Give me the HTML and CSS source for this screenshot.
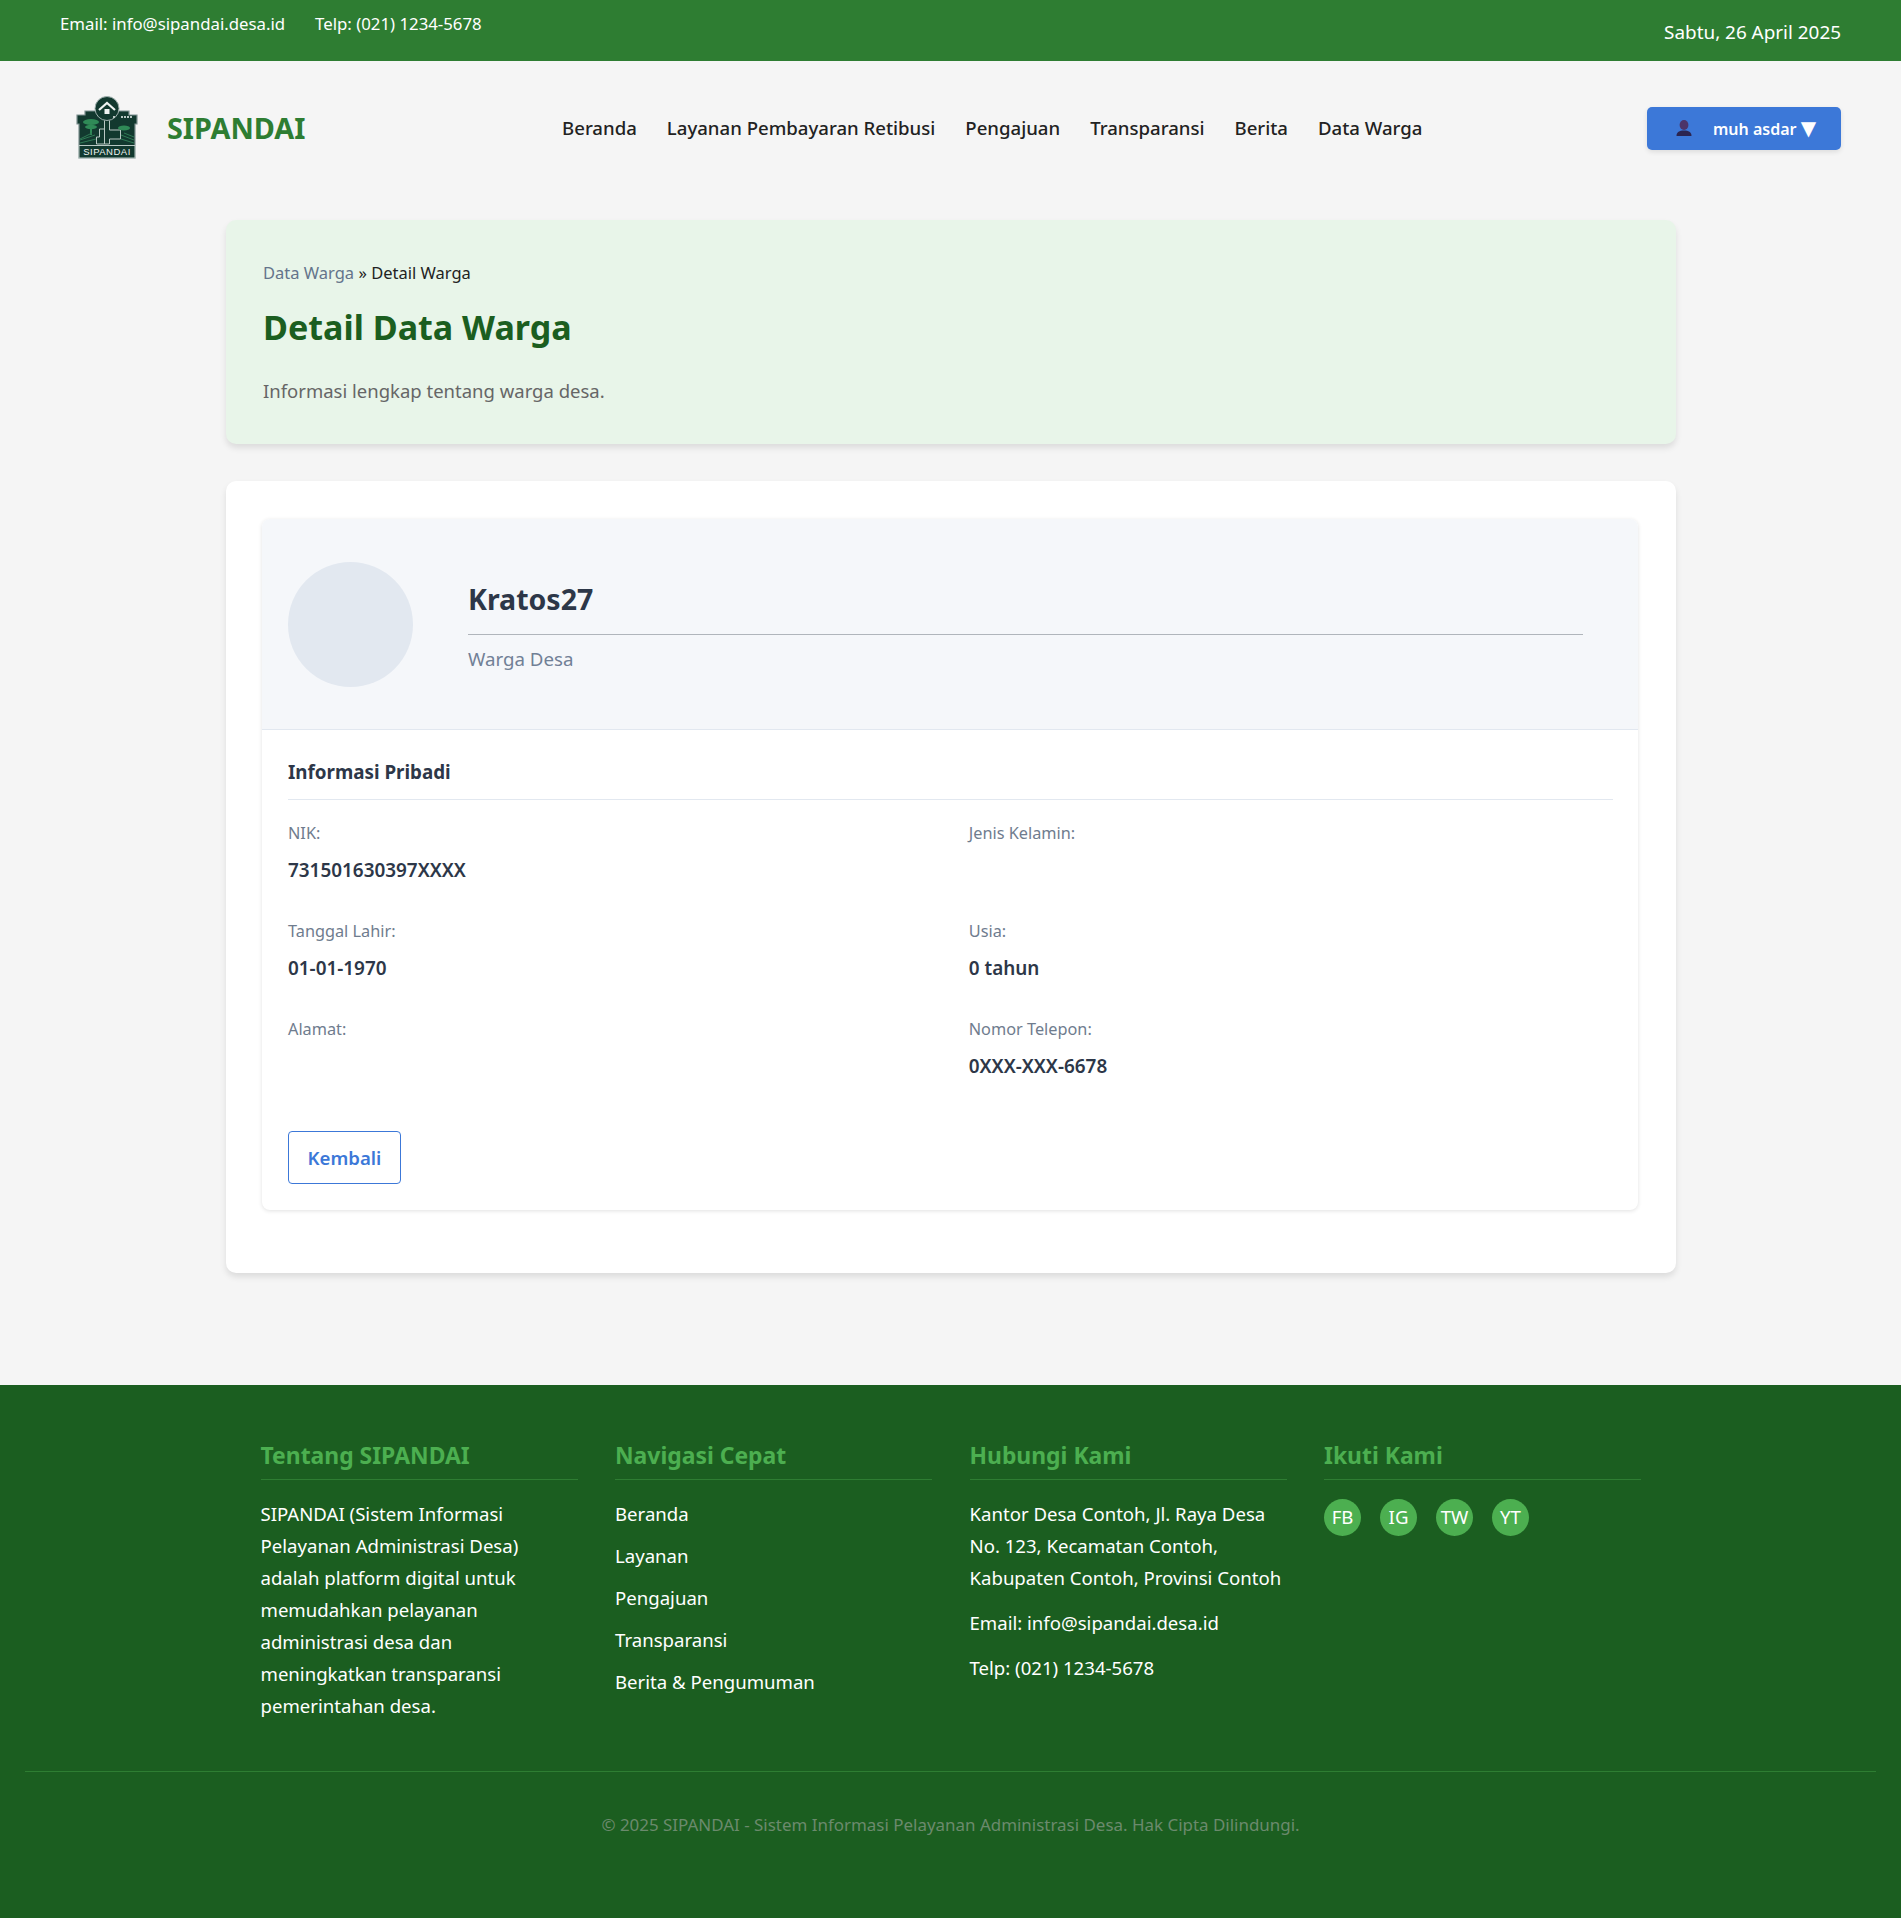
FILE: index.html
```html
<!DOCTYPE html>
<html lang="id">
<head>
    <meta charset="UTF-8">
    <meta name="viewport" content="width=device-width, initial-scale=1.0">
    <title>Detail Data Warga - SIPANDAI</title>
    <link rel="stylesheet" href="styles.css">
</head>
<body>
    <div class="topbar">
        <div class="topbar-contact">
            <span>Email: info@sipandai.desa.id</span>
            <span>Telp: (021) 1234-5678</span>
        </div>
        <div class="topbar-date">Sabtu, 26 April 2025</div>
    </div>

    <header class="site-header">
        <a class="brand" href="#">
            <svg class="brand-logo" viewBox="0 0 64 64" width="64" height="64">
                <path d="M10 15h11v-3h22v3h11v4h8v9h-2v34H4V28H2v-9h8z" fill="#12392f" stroke="#7f9291" stroke-width="1.2"/>
                <circle cx="32" cy="12.500" r="12" fill="#12392f" stroke="#9fb0ae" stroke-width="1"/>
                <path d="M24 14l8-7 8 7" fill="none" stroke="#eef3f1" stroke-width="2.200"/>
                <rect x="29.500" y="13" width="5" height="5" fill="#eef3f1"/>
                <path d="M29.500 24.500V48h5V43h11v-9h-11V24.500M29.500 33h-5v8h-3v7h8" fill="none" stroke="#b9c8c4" stroke-width="1"/>
                <ellipse cx="16" cy="26" rx="8" ry="3" fill="#2f8a57"/>
                <ellipse cx="16" cy="31" rx="6" ry="2.200" fill="#2f8a57"/>
                <rect x="15" y="31" width="2" height="8" fill="#2f8a57"/>
                <ellipse cx="49" cy="32" rx="6" ry="2.500" fill="#2f8a57"/>
                <path d="M38 21h3M46 21h12" stroke="#b9c8c4" stroke-width="2" stroke-dasharray="2 1"/>
                <path d="M5 44l15-5M5 47l16-4M5 43l12-6M59 44l-13-5M59 47l-13-4M59 41l-10-4" stroke="#2f7a55" stroke-width="1"/>
                <rect x="4" y="49.500" width="56" height="12.500" fill="#12392f" stroke="#b9c8c4" stroke-width="1"/>
                <text x="32" y="59.400" class="brand-logo-text" text-anchor="middle">SIPANDAI</text>
            </svg>
            <span class="brand-name">SIPANDAI</span>
        </a>
        <nav class="main-nav">
            <a href="#">Beranda</a>
            <a href="#">Layanan Pembayaran Retibusi</a>
            <a href="#">Pengajuan</a>
            <a href="#">Transparansi</a>
            <a href="#">Berita</a>
            <a href="#">Data Warga</a>
        </nav>
        <button class="user-btn">
            <svg class="user-icon" viewBox="0 0 18 18" width="18" height="18">
                <ellipse cx="9" cy="6" rx="4.400" ry="5" fill="#4c3468"/>
                <path d="M1.500 17c0-4 3-5.500 7.500-5.500s7.500 1.500 7.500 5.500z" fill="#2b2450"/>
            </svg>
            <span class="user-name">muh asdar <span class="caret">▼</span></span>
        </button>
    </header>

    <main class="content">
        <section class="page-head">
            <div class="breadcrumb"><a href="#">Data Warga</a> » <span>Detail Warga</span></div>
            <h1>Detail Data Warga</h1>
            <p>Informasi lengkap tentang warga desa.</p>
        </section>

        <section class="panel">
            <div class="profile-card">
                <div class="profile-head">
                    <div class="avatar"></div>
                    <div class="profile-title">
                        <h2>Kratos27</h2>
                        <p>Warga Desa</p>
                    </div>
                </div>
                <div class="profile-body">
                    <h3>Informasi Pribadi</h3>
                    <div class="info-grid">
                        <div class="info-item">
                            <div class="info-label">NIK:</div>
                            <div class="info-value">731501630397XXXX</div>
                        </div>
                        <div class="info-item">
                            <div class="info-label">Jenis Kelamin:</div>
                            <div class="info-value"></div>
                        </div>
                        <div class="info-item">
                            <div class="info-label">Tanggal Lahir:</div>
                            <div class="info-value">01-01-1970</div>
                        </div>
                        <div class="info-item">
                            <div class="info-label">Usia:</div>
                            <div class="info-value">0 tahun</div>
                        </div>
                        <div class="info-item">
                            <div class="info-label">Alamat:</div>
                            <div class="info-value"></div>
                        </div>
                        <div class="info-item">
                            <div class="info-label">Nomor Telepon:</div>
                            <div class="info-value">0XXX-XXX-6678</div>
                        </div>
                    </div>
                    <a class="btn-back" href="#">Kembali</a>
                </div>
            </div>
        </section>
    </main>

    <footer class="site-footer">
        <div class="footer-cols">
            <div class="footer-col">
                <h4>Tentang SIPANDAI</h4>
                <p>SIPANDAI (Sistem Informasi Pelayanan Administrasi Desa) adalah platform digital untuk memudahkan pelayanan administrasi desa dan meningkatkan transparansi pemerintahan desa.</p>
            </div>
            <div class="footer-col">
                <h4>Navigasi Cepat</h4>
                <ul>
                    <li><a href="#">Beranda</a></li>
                    <li><a href="#">Layanan</a></li>
                    <li><a href="#">Pengajuan</a></li>
                    <li><a href="#">Transparansi</a></li>
                    <li><a href="#">Berita &amp; Pengumuman</a></li>
                </ul>
            </div>
            <div class="footer-col">
                <h4>Hubungi Kami</h4>
                <p>Kantor Desa Contoh, Jl. Raya Desa No. 123, Kecamatan Contoh, Kabupaten Contoh, Provinsi Contoh</p>
                <p>Email: info@sipandai.desa.id</p>
                <p>Telp: (021) 1234-5678</p>
            </div>
            <div class="footer-col">
                <h4>Ikuti Kami</h4>
                <div class="socials">
                    <a href="#">FB</a>
                    <a href="#">IG</a>
                    <a href="#">TW</a>
                    <a href="#">YT</a>
                </div>
            </div>
        </div>
        <div class="footer-bottom">© 2025 SIPANDAI - Sistem Informasi Pelayanan Administrasi Desa. Hak Cipta Dilindungi.</div>
    </footer>
</body>
</html>
```

FILE: styles.css
```css
* {
    box-sizing: border-box;
    margin: 0;
    padding: 0;
}
body {
    font-family: "Noto Sans", "Open Sans", Arial, sans-serif;
    background-color: #f5f5f5;
    color: #333;
    font-size: 16px;
    line-height: 1.6;
}
a {
    text-decoration: none;
    color: inherit;
}
ul {
    list-style: none;
}

.topbar {
    display: flex;
    justify-content: space-between;
    height: 61px;
    padding: 0 60px;
    background-color: #2e7d32;
    color: #fff;
}
.topbar-contact {
    display: flex;
    gap: 30px;
    padding-top: 11px;
    font-size: 16.800px;
}
.topbar-date {
    padding-top: 17px;
    font-size: 18.900px;
}

.site-header {
    display: flex;
    align-items: center;
    justify-content: space-between;
    height: 134px;
    padding: 0 60px 0 75px;
}
.brand {
    display: flex;
    align-items: center;
    gap: 28px;
}
.brand-logo-text {
    font-size: 9.500px;
    letter-spacing: 0.5px;
    fill: #eef3f1;
    font-family: "Liberation Sans", sans-serif;
}
.brand-name {
    padding-top: 1px;
    font-size: 28.800px;
    font-weight: 700;
    color: #2e7d32;
}
.main-nav {
    display: flex;
    gap: 30px;
    margin-left: 32px;
    font-size: 18.600px;
    font-weight: 500;
    color: #222;
}
.user-btn {
    display: flex;
    align-items: center;
    gap: 20px;
    width: 194px;
    height: 43px;
    padding: 0 24px 0 28px;
    border: none;
    border-radius: 5px;
    background-color: #3c78d8;
    color: #fff;
    font: inherit;
    font-weight: 600;
    box-shadow: 0 2px 5px rgba(0, 0, 0, 0.1);
}
.user-name {
    padding-top: 3px;
}
.caret {
    font-family: "DejaVu Sans", sans-serif;
    font-size: 20px;
    line-height: 1;
}

.content {
    width: 1450px;
    margin: 25px auto 112px;
}
.page-head {
    height: 224px;
    padding: 39.500px 37.500px 0;
    margin-bottom: 37px;
    background-color: #e8f5e9;
    border-radius: 10px;
    box-shadow: 0 4px 6px rgba(0, 0, 0, 0.1);
}
.breadcrumb {
    font-size: 16.500px;
    color: #222;
}
.breadcrumb a {
    color: #64748b;
}
.page-head h1 {
    margin: 14px 0 22px;
    font-size: 34.100px;
    font-weight: 700;
    color: #1b5e20;
    line-height: 1.6;
}
.page-head p {
    font-size: 18.500px;
    color: #666;
}

.panel {
    height: 792px;
    padding: 38px 38px 38px 36px;
    background-color: #fff;
    border-radius: 10px;
    box-shadow: 0 4px 6px rgba(0, 0, 0, 0.1);
}
.profile-card {
    height: 691px;
    background-color: #fff;
    border-radius: 8px;
    box-shadow: 0 1px 4px rgba(0, 0, 0, 0.12);
    overflow: hidden;
}
.profile-head {
    display: flex;
    align-items: center;
    gap: 55.500px;
    height: 211px;
    padding: 0 55px 0 26px;
    background-color: #f5f7fa;
    border-bottom: 1px solid #e2e8f0;
}
.avatar {
    flex: none;
    width: 125px;
    height: 125px;
    border-radius: 50%;
    background-color: #e2e8f0;
}
.profile-title {
    flex: 1;
    padding-top: 2.500px;
}
.profile-title h2 {
    padding-bottom: 12px;
    border-bottom: 1px solid #b0b5bb;
    font-size: 28.500px;
    font-weight: 700;
    color: #2d3748;
}
.profile-title p {
    margin-top: 8.500px;
    font-size: 18.700px;
    color: #718096;
}
.profile-body {
    padding: 27px 25px 0 26.500px;
}
.profile-body h3 {
    padding-bottom: 12px;
    margin-bottom: 20px;
    border-bottom: 1px solid #e2e8f0;
    font-size: 18.800px;
    font-weight: 700;
    color: #2d3748;
}
.info-grid {
    display: grid;
    grid-template-columns: 1fr 1fr;
    column-gap: 37px;
}
.info-item {
    height: 98px;
}
.info-label {
    font-size: 16.300px;
    color: #6f7c8e;
}
.info-value {
    margin-top: 8.500px;
    font-size: 18.900px;
    font-weight: 600;
    color: #2d3748;
}
.btn-back {
    display: inline-block;
    margin-top: 17px;
    padding: 10.500px 18.500px;
    border: 1px solid #3c78d8;
    border-radius: 4px;
    color: #3c78d8;
    font-size: 18.600px;
    font-weight: 600;
}

.site-footer {
    height: 533px;
    padding-top: 52.500px;
    background-color: #1b5e20;
    color: #fff;
}
.footer-cols {
    display: grid;
    grid-template-columns: repeat(4, 317px);
    column-gap: 37.500px;
    width: 1380px;
    height: 333.500px;
    margin: 0 auto;
}
.footer-col h4 {
    padding-bottom: 5px;
    margin-bottom: 17.500px;
    border-bottom: 1px solid #2e7d32;
    font-size: 22.900px;
    font-weight: 700;
    color: #4caf50;
}
.footer-col p {
    margin-bottom: 13px;
    font-size: 18.600px;
    line-height: 32px;
}
.footer-col li {
    margin-bottom: 10px;
    font-size: 18.600px;
    line-height: 32px;
}
.socials {
    display: flex;
    gap: 19px;
    margin-top: 18.500px;
}
.socials a {
    display: flex;
    align-items: center;
    justify-content: center;
    min-width: 37px;
    height: 37px;
    padding: 0 3px;
    border-radius: 50%;
    background-color: #4caf50;
    font-size: 18.600px;
}
.footer-bottom {
    margin: 0 25px;
    padding-top: 39px;
    border-top: 1px solid #2e7d32;
    text-align: center;
    font-size: 16.950px;
    color: #6b8a6d;
}
```
